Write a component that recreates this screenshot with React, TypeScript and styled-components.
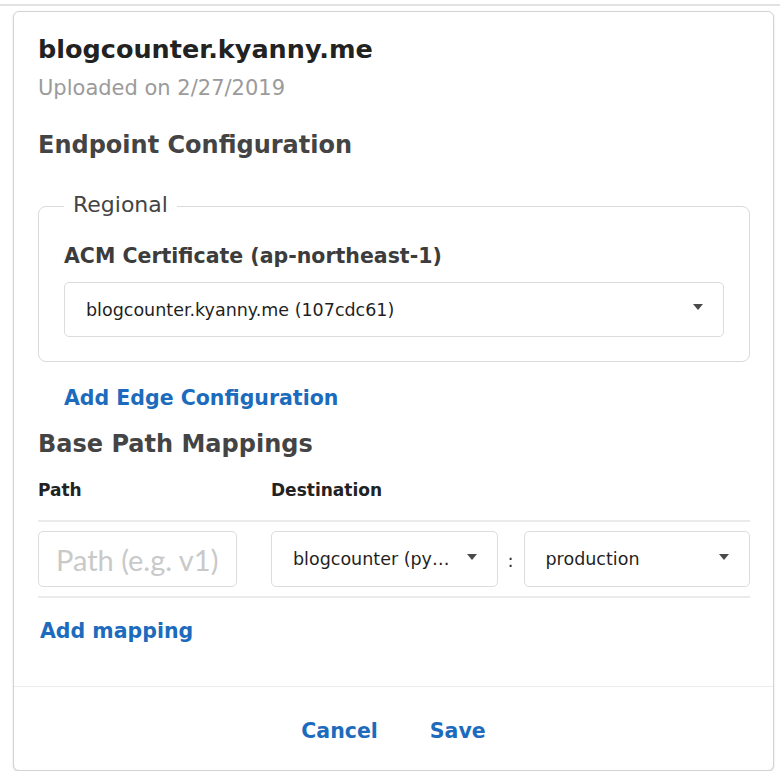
import React from "react";
import styled, { createGlobalStyle } from "styled-components";

const Global = createGlobalStyle`
  html, body { margin: 0; padding: 0; background: #ffffff; }
  body { font-family: "DejaVu Sans", "Liberation Sans", sans-serif; }
  * { box-sizing: border-box; }
`;

const Page = styled.div`
  padding-top: 4px;
  width: 780px;
`;

const TopRule = styled.div`
  height: 2px;
  background: #e2e2e2;
  margin-bottom: 5px;
`;

const Card = styled.div`
  margin-left: 13px;
  width: 761px;
  border: 1px solid #d3d3d3;
  border-radius: 6px;
  box-shadow: 0 1px 2px rgba(0, 0, 0, 0.16);
  background: #fff;
`;

const Body = styled.div`
  padding: 22px 23px 43px 24px;
`;

const Title = styled.h1`
  margin: 0;
  font-size: 25.5px;
  line-height: 30px;
  font-weight: 700;
  color: #222;
`;

const Subtitle = styled.div`
  margin-top: 11px;
  font-size: 21px;
  line-height: 26px;
  color: #9b9b9b;
`;

const SectionHeading = styled.h2<{ $top: number }>`
  margin: ${(p) => p.$top}px 0 0;
  font-size: 24px;
  line-height: 30px;
  font-weight: 700;
  color: #444;
`;

const Fieldset = styled.fieldset`
  margin: 32px 0 0;
  min-width: 0;
  padding: 23px 25px 24px;
  border: 1px solid #dadada;
  border-radius: 8px;
`;

const Legend = styled.legend`
  padding: 0 9px 3px;
  font-size: 22px;
  line-height: 26px;
  color: #444;
`;

const FieldLabel = styled.div`
  margin-bottom: 14px;
  font-size: 20.5px;
  line-height: 24px;
  font-weight: 700;
  color: #3c3c3c;
`;

const SelectBox = styled.div<{ $height?: number }>`
  display: flex;
  align-items: center;
  height: ${(p) => p.$height ?? 55}px;
  padding: 0 20px 0 21px;
  border: 1px solid #dcdcdc;
  border-radius: 5px;
  background: #fff;
  min-width: 0;
`;

const SelectText = styled.span`
  flex: 1;
  min-width: 0;
  font-size: 17.5px;
  line-height: 22px;
  color: #1f1f1f;
  white-space: nowrap;
`;

const Caret = styled.span`
  flex: none;
  width: 0;
  height: 0;
  border-left: 5px solid transparent;
  border-right: 5px solid transparent;
  border-top: 6px solid #4a4a4a;
  margin-bottom: 5px;
`;

const TextButton = styled.button<{ $indent?: number; $top?: number }>`
  display: block;
  margin: ${(p) => p.$top ?? 0}px 0 0 ${(p) => p.$indent ?? 0}px;
  padding: 0;
  border: none;
  background: none;
  font-family: inherit;
  font-size: 20.5px;
  line-height: 24px;
  font-weight: 700;
  color: #1c6bbd;
  cursor: pointer;
`;

const MapGrid = styled.div`
  display: grid;
  grid-template-columns: 199px 1fr;
  column-gap: 34px;
  align-items: center;
`;

const MapHeader = styled(MapGrid)`
  margin-top: 21px;
  padding-bottom: 20px;
  border-bottom: 2px solid #ebebeb;
`;

const ColumnLabel = styled.div`
  font-size: 17px;
  line-height: 20px;
  font-weight: 700;
  color: #222;
`;

const MapRow = styled(MapGrid)`
  padding: 9px 0;
  border-bottom: 2px solid #ebebeb;
`;

const PathInput = styled.input`
  width: 100%;
  height: 56px;
  padding: 0 8px 0 17px;
  border: 1px solid #dcdcdc;
  border-radius: 5px;
  font-family: Lato, "Liberation Sans", sans-serif;
  font-size: 29px;
  color: #222;
  outline: none;
  &::placeholder {
    color: #c9c9c9;
  }
`;

const Destination = styled.div`
  display: grid;
  grid-template-columns: 1fr 26px 1fr;
  align-items: center;
`;

const Colon = styled.span`
  text-align: center;
  font-size: 18px;
  line-height: 22px;
  color: #333;
  padding-top: 4px;
`;

const Footer = styled.div`
  display: flex;
  justify-content: center;
  gap: 52px;
  padding: 32px 0 27px;
  border-top: 1px solid #ececec;
`;

function Select({ value, height }: { value: string; height?: number }) {
  return (
    <SelectBox $height={height}>
      <SelectText>{value}</SelectText>
      <Caret />
    </SelectBox>
  );
}

export default function App() {
  return (
    <Page>
      <Global />
      <TopRule />
      <Card>
        <Body>
          <Title>blogcounter.kyanny.me</Title>
          <Subtitle>Uploaded on 2/27/2019</Subtitle>
          <SectionHeading $top={29}>Endpoint Configuration</SectionHeading>
          <Fieldset>
            <Legend>Regional</Legend>
            <FieldLabel>ACM Certificate (ap-northeast-1)</FieldLabel>
            <Select value="blogcounter.kyanny.me (107cdc61)" />
          </Fieldset>
          <TextButton $top={24} $indent={26}>
            Add Edge Configuration
          </TextButton>
          <SectionHeading $top={19}>Base Path Mappings</SectionHeading>
          <MapHeader>
            <ColumnLabel>Path</ColumnLabel>
            <ColumnLabel>Destination</ColumnLabel>
          </MapHeader>
          <MapRow>
            <PathInput placeholder="Path (e.g. v1)" />
            <Destination>
              <Select value="blogcounter (py…" height={56} />
              <Colon>:</Colon>
              <Select value="production" height={56} />
            </Destination>
          </MapRow>
          <TextButton $top={21} $indent={2}>
            Add mapping
          </TextButton>
        </Body>
        <Footer>
          <TextButton>Cancel</TextButton>
          <TextButton>Save</TextButton>
        </Footer>
      </Card>
    </Page>
  );
}
